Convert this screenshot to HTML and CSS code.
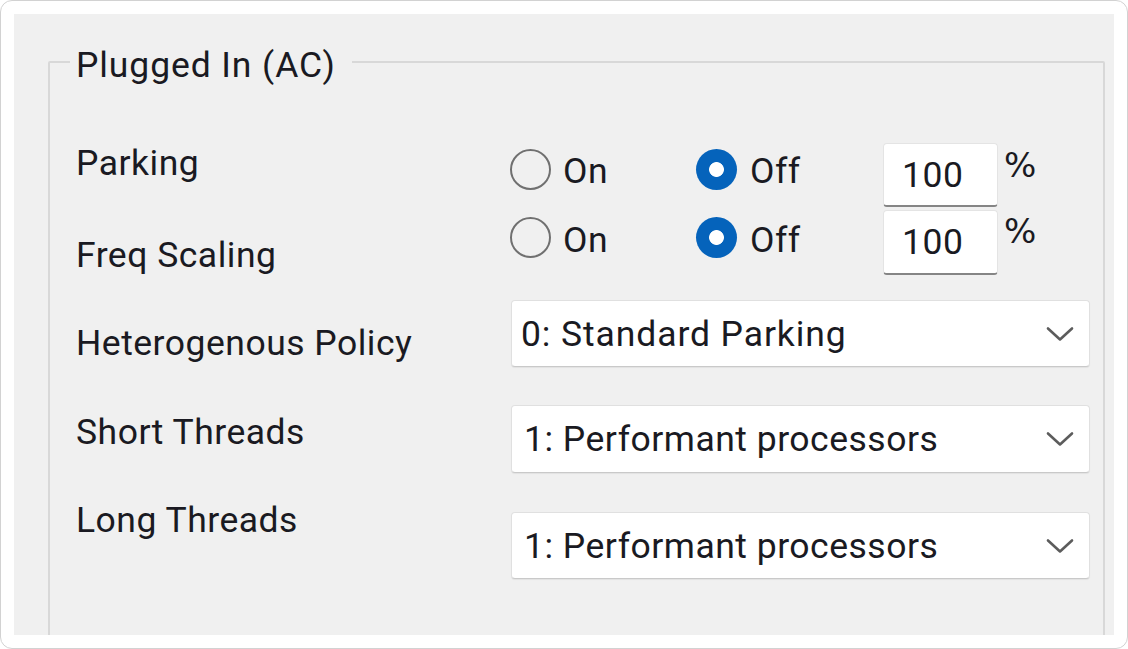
FILE: index.html
```html
<!DOCTYPE html>
<html>
<head>
<meta charset="utf-8">
<link rel="stylesheet" href="styles.css">
</head>
<body>
<div class="frame">
  <div class="panel">
    <div class="group">
      <span class="legend">Plugged In (AC)</span>
      <div class="labels">
        <div class="label l1">Parking</div>
        <div class="label l2">Freq Scaling</div>
        <div class="label l3">Heterogenous Policy</div>
        <div class="label l4">Short Threads</div>
        <div class="label l5">Long Threads</div>
      </div>
      <div class="controls">
        <div class="radio-row r1">
          <div class="opt opt-on"><span class="radio"></span><span class="opt-text">On</span></div>
          <div class="opt opt-off"><span class="radio checked"></span><span class="opt-text off-text">Off</span></div>
          <div class="num">100</div>
          <span class="pct">%</span>
        </div>
        <div class="radio-row r2">
          <div class="opt opt-on"><span class="radio"></span><span class="opt-text">On</span></div>
          <div class="opt opt-off"><span class="radio checked"></span><span class="opt-text off-text">Off</span></div>
          <div class="num">100</div>
          <span class="pct">%</span>
        </div>
        <div class="select s1"><span class="select-text">0: Standard Parking</span><svg class="chev" width="28" height="16" viewBox="0 0 28 16"><path d="M2 2.5 L14 13.5 L26 2.5" fill="none" stroke="#5c5c5c" stroke-width="2.6" stroke-linecap="round" stroke-linejoin="round"/></svg></div>
        <div class="select s2"><span class="select-text">1: Performant processors</span><svg class="chev" width="28" height="16" viewBox="0 0 28 16"><path d="M2 2.5 L14 13.5 L26 2.5" fill="none" stroke="#5c5c5c" stroke-width="2.6" stroke-linecap="round" stroke-linejoin="round"/></svg></div>
        <div class="select s3"><span class="select-text">1: Performant processors</span><svg class="chev" width="28" height="16" viewBox="0 0 28 16"><path d="M2 2.5 L14 13.5 L26 2.5" fill="none" stroke="#5c5c5c" stroke-width="2.6" stroke-linecap="round" stroke-linejoin="round"/></svg></div>
      </div>
    </div>
  </div>
</div>
</body>
</html>
```
FILE: styles.css
```css
* { box-sizing: border-box; }
html, body { margin: 0; padding: 0; background: #ffffff; }
body {
  font-family: Roboto, "Liberation Sans", sans-serif;
  font-size: 35.5px;
  letter-spacing: 0.5px;
  line-height: 40px;
  color: #1a1a22;
}
.frame {
  width: 1128px;
  height: 649px;
  background: #ffffff;
  border: 1px solid #d2d2d2;
  border-radius: 12px;
  padding: 13px;
  overflow: hidden;
}
.panel {
  width: 1100px;
  height: 621px;
  background: #f0f0f0;
  overflow: hidden;
  padding: 47px 0 0 34px;
}
.group {
  position: relative;
  width: 1057px;
  height: 640px;
  border: 2px solid #d8d8d8;
  border-radius: 2px;
  display: grid;
  grid-template-columns: 434px 1fr;
  padding: 80px 0 0 26px;
  align-items: start;
}
.legend {
  position: absolute;
  top: -18px;
  left: 20px;
  padding: 0 16px 0 6px;
  background: #f0f0f0;
  height: 40px;
  white-space: nowrap;
  letter-spacing: 0.9px;
}
.labels { display: flex; flex-direction: column; }
.label { height: 40px; white-space: nowrap; }
.l2 { margin-top: 52px; }
.l3 { margin-top: 48px; }
.l4 { margin-top: 49px; }
.l5 { margin-top: 48px; }

.controls { display: flex; flex-direction: column; }
.radio-row { display: flex; align-items: flex-start; height: 64px; }
.r2 { margin-top: 3px; height: 65px; }
.opt { display: flex; align-items: flex-start; }
.opt-on { flex: 0 0 186px; }
.opt-off { flex: 0 0 187px; }
.radio {
  width: 41px;
  height: 41px;
  border-radius: 50%;
  border: 2.8px solid #707070;
  margin-top: 6px;
  flex: none;
}
.r2 .radio { margin-top: 7px; }
.radio.checked {
  border: none;
  background: radial-gradient(circle, #ffffff 0 7px, #0563bb 7.8px);
}
.opt-text { margin-left: 12px; margin-top: 8px; height: 40px; }
.r2 .opt-text { margin-top: 10px; }
.off-text { margin-left: 13px; }
.num {
  width: 115px;
  height: 100%;
  background: #ffffff;
  border: 1px solid #e4e4e4;
  border-bottom: 2px solid #858585;
  border-radius: 4px;
  padding: 11px 0 0 18px;
}
.pct {
  margin-left: 6px;
  margin-top: 2px;
  height: 40px;
  font-family: "DejaVu Sans", sans-serif;
  font-size: 34px;
  letter-spacing: 0;
}
.r2 .pct { margin-top: 1px; }

.select {
  margin-left: 1px;
  width: 579px;
  background: #ffffff;
  border: 1px solid #e0e0e0;
  border-bottom-color: #c9c9c9;
  border-radius: 4px;
  box-shadow: 0 1px 1px rgba(0, 0, 0, 0.06);
  display: flex;
  align-items: center;
  justify-content: space-between;
  padding: 0 15px 0 9px;
}
.s2, .s3 { padding-left: 12px; }
.s1 .select-text { letter-spacing: 0.9px; }
.select-text { height: 40px; white-space: nowrap; }
.s1 { margin-top: 25px; height: 67px; }
.s2 { margin-top: 38px; height: 68px; }
.s3 { margin-top: 39px; height: 67px; }
.chev { flex: none; }
```
